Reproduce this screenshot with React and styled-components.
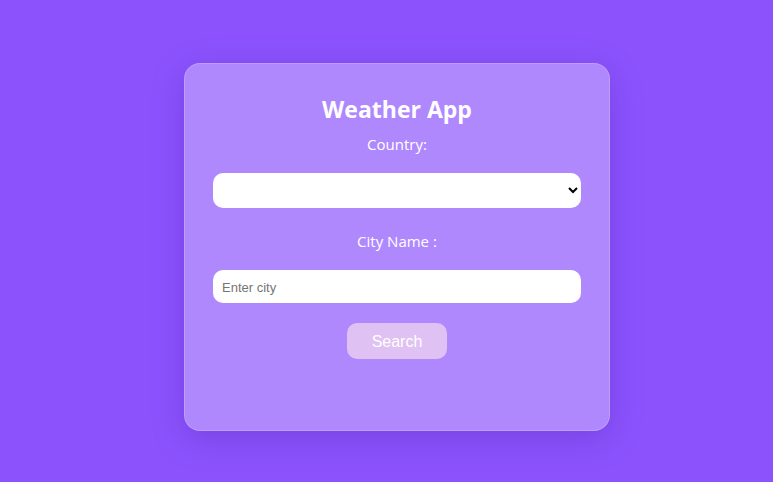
import styled, { createGlobalStyle } from "styled-components";

const GlobalStyle = createGlobalStyle`
  * { box-sizing: border-box; }
  body {
    margin: 0;
    background-color: #8c53fd;
    font-family: "Open Sans", "Noto Sans", sans-serif;
  }
`;

function App() {
  return (
    <>
      <GlobalStyle />
      <Page>
        <Card>
          <Title>Weather App</Title>
          <Label htmlFor="country">Country:</Label>
          <Select id="country">
            <option value=""></option>
          </Select>
          <Label htmlFor="city" $top={22}>City Name :</Label>
          <Input id="city" type="text" placeholder="Enter city" />
          <Button>Search</Button>
        </Card>
      </Page>
    </>
  );
}

const Page = styled.div`
  min-height: 482px;
  display: flex;
  justify-content: center;
  padding: 63px 0 0 21px;
`;

const Card = styled.div`
  width: 426px;
  height: 368px;
  padding: 29px 29px 0 29px;
  display: flex;
  flex-direction: column;
  align-items: center;
  background-color: #b088fe;
  border: 1px solid rgba(255, 255, 255, 0.18);
  border-radius: 16px;
  box-shadow: 0 8px 32px rgba(60, 20, 150, 0.25);
`;

const Title = styled.h1`
  margin: 0;
  font-size: 23px;
  line-height: 32px;
  font-weight: 700;
  color: #ffffff;
`;

const Label = styled.label`
  display: block;
  margin-top: ${({ $top }) => ($top ? $top : 8)}px;
  font-size: 15px;
  line-height: 22px;
  color: #ffffff;
`;

const Select = styled.select`
  width: 368px;
  height: 35px;
  margin-top: 18px;
  padding: 0 8px;
  border: none;
  border-radius: 10px;
  background-color: #ffffff;
  font-size: 14px;
  outline: none;
`;

const Input = styled.input`
  width: 368px;
  height: 33px;
  margin-top: 18px;
  padding: 1px 9px 0 9px;
  border: none;
  border-radius: 10px;
  background-color: #ffffff;
  font-family: "Liberation Sans", Arial, sans-serif;
  font-size: 13px;
  color: #333;
  outline: none;

  ::placeholder {
    color: #767676;
  }
`;

const Button = styled.button`
  width: 100px;
  height: 36px;
  margin-top: 20px;
  padding-top: 2px;
  border: none;
  border-radius: 10px;
  background-color: #dfc1f3;
  color: #ffffff;
  font-family: "Liberation Sans", Arial, sans-serif;
  font-size: 16px;
  cursor: pointer;
`;

export default App;
